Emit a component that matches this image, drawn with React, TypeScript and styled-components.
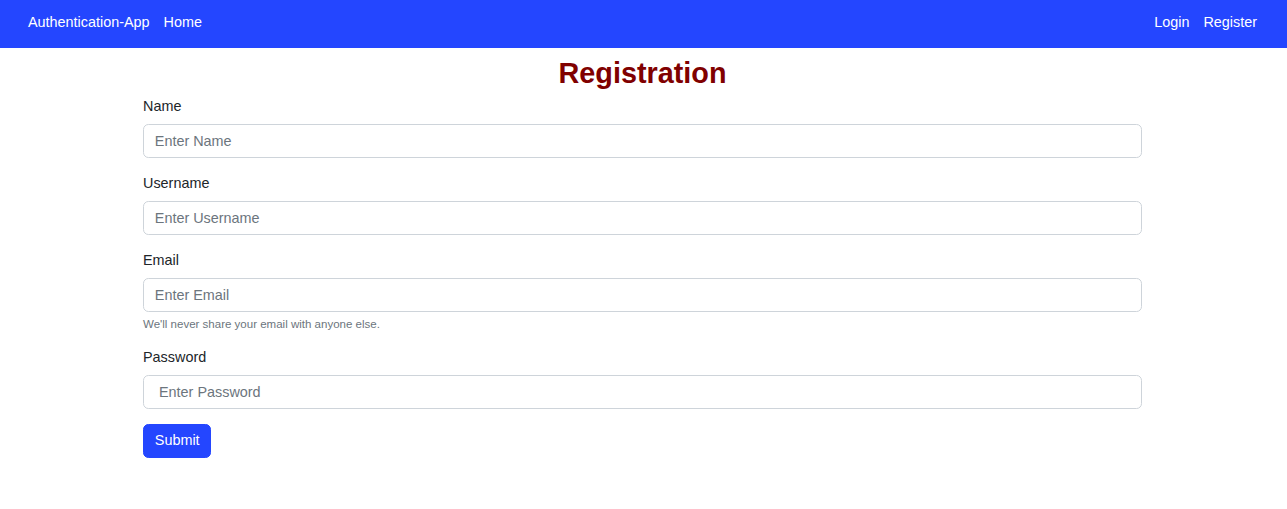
import React from "react";
import styled, { createGlobalStyle } from "styled-components";

const Global = createGlobalStyle`
  * { box-sizing: border-box; }
  html, body { margin: 0; padding: 0; background: #fff; }
  body {
    font-family: "Liberation Sans", Arial, sans-serif;
    font-size: 14.4px;
    line-height: 1.5;
    color: #212529;
  }
`;

const NavBar = styled.nav`
  height: 48px;
  background: #2446ff;
  display: flex;
  align-items: center;
  justify-content: space-between;
  padding: 0 30px 2px 28px;
`;

const NavGroup = styled.div`
  display: flex;
  align-items: center;
  gap: 14px;
`;

const NavLink = styled.a`
  color: #fff;
  text-decoration: none;
  font-size: 14.4px;
  line-height: 21.6px;
  cursor: pointer;
`;

const Main = styled.main`
  padding: 0 145px 0 143px;
`;

const Title = styled.h2`
  margin: 8px 0 5px;
  text-align: center;
  font-size: 28.8px;
  line-height: 34.56px;
  font-weight: 700;
  color: #800000;
`;

const Form = styled.form`
  display: flex;
  flex-direction: column;
`;

const Field = styled.div`
  margin-bottom: 14.4px;
`;

const Label = styled.label`
  display: block;
  font-size: 14.4px;
  line-height: 21.6px;
  margin-bottom: 6.6px;
  color: #212529;
`;

const Input = styled.input<{ $indent?: number }>`
  display: block;
  width: 100%;
  height: 34.4px;
  padding: 5.4px 10.8px 5.4px ${(p) => p.$indent ?? 10.8}px;
  font-family: inherit;
  font-size: 14.4px;
  line-height: 21.6px;
  color: #212529;
  background: #fff;
  border: 1px solid #ced4da;
  border-radius: 5.4px;
  outline: none;
  &::placeholder {
    color: #6c757d;
    opacity: 1;
  }
`;

const Hint = styled.div`
  margin-top: 4.2px;
  font-size: 11.52px;
  line-height: 16.2px;
  color: #6c757d;
`;

const SubmitButton = styled.button`
  align-self: flex-start;
  height: 34.4px;
  padding: 5.4px 10.8px;
  font-family: inherit;
  font-size: 14.4px;
  line-height: 21.6px;
  color: #fff;
  background: #2446ff;
  border: 1px solid #2446ff;
  border-radius: 5.4px;
  cursor: pointer;
`;

export default function App() {
  return (
    <>
      <Global />
      <NavBar>
        <NavGroup>
          <NavLink>Authentication-App</NavLink>
          <NavLink>Home</NavLink>
        </NavGroup>
        <NavGroup>
          <NavLink>Login</NavLink>
          <NavLink>Register</NavLink>
        </NavGroup>
      </NavBar>
      <Main>
        <Title>Registration</Title>
        <Form onSubmit={(e) => e.preventDefault()}>
          <Field>
            <Label>Name</Label>
            <Input type="text" placeholder="Enter Name" />
          </Field>
          <Field>
            <Label>Username</Label>
            <Input type="text" placeholder="Enter Username" />
          </Field>
          <Field>
            <Label>Email</Label>
            <Input type="email" placeholder="Enter Email" />
            <Hint>We'll never share your email with anyone else.</Hint>
          </Field>
          <Field>
            <Label>Password</Label>
            <Input type="password" placeholder="Enter Password" $indent={15} />
          </Field>
          <SubmitButton type="submit">Submit</SubmitButton>
        </Form>
      </Main>
    </>
  );
}
